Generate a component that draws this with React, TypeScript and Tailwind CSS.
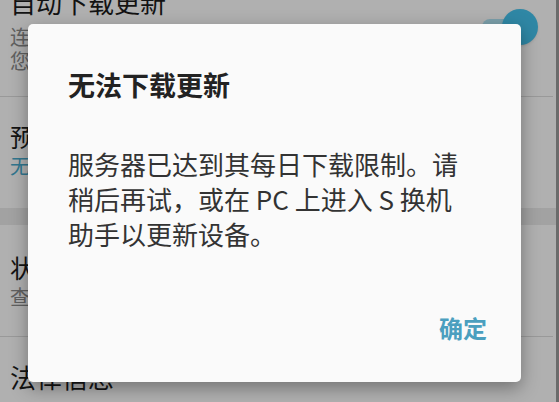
import React from "react";

const font = { fontFamily: '"Noto Sans CJK SC", "Noto Sans", sans-serif' };

function Toggle() {
  return (
    <div className="relative w-[58px] h-[40px] shrink-0">
      <div className="absolute left-[2px] top-[12px] w-[40px] h-[16px] rounded-full bg-[#b0e4f4]" />
      <div className="absolute left-[22px] top-[2px] w-[36px] h-[36px] rounded-full bg-[#44c2ec] shadow" />
    </div>
  );
}

export default function App() {
  return (
    <div
      className="relative w-[559px] h-[402px] overflow-hidden bg-[#fcfcfc]"
      style={font}
    >
      {/* settings page behind */}
      <div className="flex flex-col">
        <div className="flex items-start justify-between pl-[10px] pr-[21px] mt-[-15px] h-[111px]">
          <div className="flex flex-col">
            <div className="text-[26px] leading-[34px] text-[#1c1c1c]">自动下载更新</div>
            <div className="text-[20px] leading-[24px] text-[#8a8a8a] mt-[6px]">
              连接到 WLAN 时自动下载
              <br />
              您可以稍后安装
            </div>
          </div>
          <div className="mt-[22px]">
            <Toggle />
          </div>
        </div>
        <div className="h-px bg-[#dcdcdc] mr-[6px]" />
        <div className="flex flex-col pl-[10px] h-[111px] pt-[22px]">
          <div className="text-[25px] leading-[34px] text-[#1c1c1c]">预定软件更新</div>
          <div className="text-[20px] leading-[26px] text-[#47a9cc]">无</div>
        </div>
        <div className="h-[17px] bg-[#e9e9e9]" />
        <div className="flex flex-col pl-[10px] h-[111px] pt-[25px]">
          <div className="text-[25px] leading-[34px] text-[#1c1c1c]">状态</div>
          <div className="text-[20px] leading-[26px] text-[#8a8a8a]">查看最近一次更新</div>
        </div>
        <div className="h-px bg-[#dcdcdc] mr-[6px]" />
        <div className="pl-[10px] pt-[23px] text-[26px] leading-[34px] text-[#1c1c1c]">
          法律信息
        </div>
      </div>

      {/* scrollbar strip */}
      <div className="absolute right-0 top-0 w-[3px] h-full bg-[#9a9a9a]" />

      {/* dim overlay */}
      <div className="absolute inset-0 bg-black/[0.3]" />

      {/* dialog */}
      <div className="absolute left-[28px] top-[24px] w-[493px] h-[358px] rounded-[5px] bg-[#fafafa] shadow-[0_6px_18px_rgba(0,0,0,0.35)] flex flex-col pl-[40px] pr-[34px]">
        <div className="pt-[44px] text-[27px] leading-[34px] font-bold text-[#222222]">
          无法下载更新
        </div>
        <div className="mt-[44px] text-[26px] leading-[35px] text-[#333333]">
          服务器已达到其每日下载限制。请
          <br />
          稍后再试，或在 PC 上进入 S 换机
          <br />
          助手以更新设备。
        </div>
        <div className="mt-auto mb-[40px] flex justify-end">
          <button className="text-[24px] leading-[28px] font-bold text-[#4b9fbf]">
            确定
          </button>
        </div>
      </div>
    </div>
  );
}
